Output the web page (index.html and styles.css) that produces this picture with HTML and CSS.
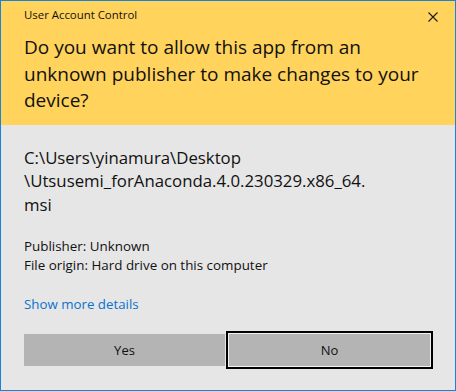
FILE: index.html
```html
<!DOCTYPE html>
<html lang="en">
<head>
<meta charset="utf-8">
<title>User Account Control</title>
<link rel="stylesheet" href="styles.css">
</head>
<body>
<div class="uac">
  <header class="head">
    <div class="titlebar">
      <span class="title">User Account Control</span>
      <span class="close" aria-label="Close">
        <svg width="10" height="10" viewBox="0 0 10 10"><path d="M0.5 0.5 L9.5 9.5 M9.5 0.5 L0.5 9.5" stroke="#1a1a1a" stroke-width="1.1" fill="none"/></svg>
      </span>
    </div>
    <h1 class="question">Do you want to allow this app from an<br>unknown publisher to make changes to your<br>device?</h1>
  </header>
  <section class="content">
    <p class="path"><span class="line">C:\Users\yinamura\Desktop</span><span class="line">\Utsusemi_forAnaconda.4.0.230329.x86_64.</span><span class="line">msi</span></p>
    <p class="meta"><span class="line">Publisher: Unknown</span><span class="line">File origin: Hard drive on this computer</span></p>
    <a class="more" href="#">Show more details</a>
    <div class="actions">
      <button class="btn">Yes</button>
      <button class="btn focus">No</button>
    </div>
  </section>
</div>
</body>
</html>
```
FILE: styles.css
```css
* { box-sizing: border-box; }
html, body { margin: 0; padding: 0; background: #e6e6e6; }
body { font-family: "Open Sans", "Noto Sans", sans-serif; color: #000; }

.uac {
  width: 456px;
  height: 391px;
  border: 1px solid #1883d7;
  background: #e6e6e6;
  display: flex;
  flex-direction: column;
}

.head {
  background: #ffd35c;
  height: 124px;
  padding: 6px 0 0 23px;
  flex: none;
}

.titlebar {
  display: flex;
  align-items: center;
  justify-content: space-between;
  height: 16px;
}
.title {
  font-size: 11.4px;
  line-height: 16px;
  color: #111;
}
.close {
  display: flex;
  width: 10px;
  height: 10px;
  margin-right: 17px;
  margin-top: 4px;
}

.question {
  margin: 11px 0 0;
  font-size: 19px;
  font-weight: 400;
  line-height: 26.5px;
  color: #111;
}

.content {
  flex: 1;
  padding: 21px 23px 0 23px;
  display: flex;
  flex-direction: column;
}

.line { display: block; white-space: nowrap; }

.path {
  margin: 0;
  font-size: 16.8px;
  line-height: 23.4px;
  color: #111;
}

.meta {
  margin: 21px 0 0;
  font-size: 13.4px;
  line-height: 18.5px;
  color: #111;
}

.more {
  margin-top: 21px;
  font-size: 13.3px;
  line-height: 18.5px;
  color: #0b72d0;
  text-decoration: none;
  align-self: flex-start;
}

.actions {
  margin-top: 20px;
  display: flex;
  gap: 4px;
}

.btn {
  width: 201px;
  height: 32px;
  border: none;
  padding: 0;
  background: #b4b4b4;
  font-family: inherit;
  font-size: 13px;
  color: #111;
}

.btn.focus {
  box-shadow: 0 0 0 1px #f2f2f2, 0 0 0 3px #000;
}
```
